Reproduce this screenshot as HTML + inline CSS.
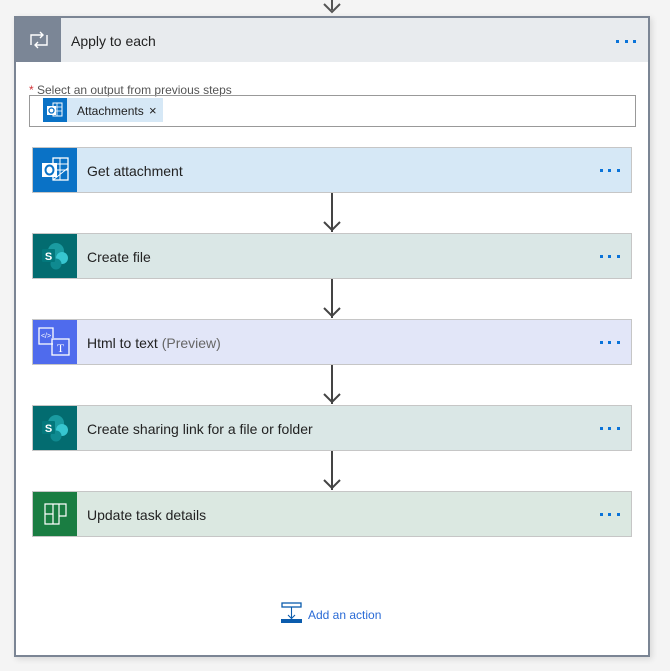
<!DOCTYPE html>
<html><head><meta charset="utf-8"><style>
*{box-sizing:border-box;margin:0;padding:0}
body{width:670px;height:671px;background:#f4f4f4;font-family:"Liberation Sans",sans-serif;position:relative;overflow:hidden}
.box{position:absolute;left:14px;top:16px;width:636px;height:641px;border:2px solid #7b8594;background:#fff;box-shadow:2px 2px 6px rgba(0,0,0,.12)}
.hdr{position:absolute;left:0;top:0;width:632px;height:44px;background:#e8ebee}
.hicon{position:absolute;left:0;top:0;width:45px;height:44px;background:#7b8696}
.htxt{position:absolute;left:55px;top:15px;font-size:14px;color:#222}
.dots{position:absolute;width:22px;height:3px}
.dots i{position:absolute;top:0;width:3px;height:3px;background:#0a73d9}
.lbl{position:absolute;left:13px;top:65px;font-size:12px;color:#555}
.lbl span{color:#d13438}
.inp{position:absolute;left:13px;top:77px;width:607px;height:32px;border:1px solid #999}
.chip{position:absolute;left:13px;top:2px;height:24px;width:120px;background:#d6e8f6;font-size:12px;color:#222}
.card{position:absolute;left:16px;width:600px;height:46px;border:1px solid #c6c6c6}
.ci{position:absolute;left:0;top:0;width:44px;height:44px}
.ct{position:absolute;left:54px;top:15px;font-size:14px;color:#222}
.arrow{position:absolute;left:315px;width:2px;background:#444}
</style></head><body>
<div style="position:absolute;left:331px;top:0;width:2px;height:10px;background:#555"></div>
<svg style="position:absolute;left:322px;top:0" width="20" height="16"><path d="M2 4 L10 12 L18 4" stroke="#555" stroke-width="2" fill="none"/></svg>
<div class="box">
 <div class="hdr">
  <div class="hicon"><svg width="45" height="44"><path d="M15 27 V17 H27 M24 14 L27 17 L24 20" stroke="#fff" stroke-width="1.4" fill="none"/><path d="M31 17 V27 H19 M22 30 L19 27 L22 24" stroke="#fff" stroke-width="1.4" fill="none"/></svg></div>
  <div class="htxt">Apply to each</div>
  <div class="dots" style="left:600px;top:22px"><i style="left:0"></i><i style="left:9px"></i><i style="left:17px"></i></div>
 </div>
 <div class="lbl"><span>*</span> Select an output from previous steps</div>
 <div class="inp"><div class="chip">
  <div style="position:absolute;left:0;top:0;width:24px;height:24px;background:#0a72c6"><svg width="24" height="24"><rect x="10" y="5" width="9" height="13" fill="none" stroke="#fff"/><path d="M10 9h9M10 13h9M14 5v13" stroke="#fff" stroke-width=".8"/><rect x="4" y="8" width="9" height="9" fill="#fff"/><circle cx="8.5" cy="12.5" r="2.5" fill="none" stroke="#0a72c6" stroke-width="1.3"/></svg></div>
  <span style="position:absolute;left:34px;top:6px">Attachments</span><span style="position:absolute;left:106px;top:5px;font-size:13px">×</span>
 </div></div>

 <div class="card" style="top:129px;background:#d6e8f6"><div class="ci" style="background:#0a72c6"><svg width="44" height="44"><rect x="20" y="10" width="15" height="22" fill="none" stroke="#fff" stroke-width="1.3"/><path d="M20 16h15M20 22h15M27 10v22M20 32 L35 20" stroke="#fff" stroke-width="1"/><rect x="9" y="15" width="15" height="14" fill="#fff"/><ellipse cx="16.5" cy="22" rx="4" ry="4.5" fill="none" stroke="#0a72c6" stroke-width="2"/></svg></div><div class="ct">Get attachment</div><div class="dots" style="left:567px;top:21px"><i style="left:0"></i><i style="left:8px"></i><i style="left:17px"></i></div></div>
 <div class="arrow" style="top:175px;height:39px"></div><svg style="position:absolute;left:306px;top:199px" width="20" height="16"><path d="M2 5 L10 13 L18 5" stroke="#444" stroke-width="2" fill="none"/></svg>

 <div class="card" style="top:215px;background:#dae7e6"><div class="ci" style="background:#036c70"><svg width="44" height="44"><circle cx="23" cy="17" r="8" fill="#1a9ba1"/><circle cx="29" cy="24" r="6" fill="#37c6d0"/><circle cx="23" cy="30" r="5.5" fill="#0f8a90"/><rect x="9" y="15" width="13" height="13" rx="1" fill="#03787c"/><text x="15.5" y="26" font-size="11" font-weight="bold" fill="#fff" text-anchor="middle" font-family="Liberation Sans">S</text></svg></div><div class="ct">Create file</div><div class="dots" style="left:567px;top:21px"><i style="left:0"></i><i style="left:8px"></i><i style="left:17px"></i></div></div>
 <div class="arrow" style="top:261px;height:39px"></div><svg style="position:absolute;left:306px;top:285px" width="20" height="16"><path d="M2 5 L10 13 L18 5" stroke="#444" stroke-width="2" fill="none"/></svg>

 <div class="card" style="top:301px;background:#e2e6f8"><div class="ci" style="background:#4f6bed"><svg width="44" height="44"><path d="M20 24 H6 V8 H20 V18" stroke="#fff" stroke-width="1.3" fill="none"/><rect x="19" y="19" width="17" height="16" fill="none" stroke="#fff" stroke-width="1.3"/><text x="13" y="18" font-size="7" fill="#fff" text-anchor="middle" font-family="Liberation Sans">&lt;/&gt;</text><text x="27.5" y="32" font-size="12" fill="#fff" text-anchor="middle" font-family="Liberation Serif">T</text></svg></div><div class="ct">Html to text <span style="color:#666">(Preview)</span></div><div class="dots" style="left:567px;top:21px"><i style="left:0"></i><i style="left:8px"></i><i style="left:17px"></i></div></div>
 <div class="arrow" style="top:347px;height:39px"></div><svg style="position:absolute;left:306px;top:371px" width="20" height="16"><path d="M2 5 L10 13 L18 5" stroke="#444" stroke-width="2" fill="none"/></svg>

 <div class="card" style="top:387px;background:#dae7e6"><div class="ci" style="background:#036c70"><svg width="44" height="44"><circle cx="23" cy="17" r="8" fill="#1a9ba1"/><circle cx="29" cy="24" r="6" fill="#37c6d0"/><circle cx="23" cy="30" r="5.5" fill="#0f8a90"/><rect x="9" y="15" width="13" height="13" rx="1" fill="#03787c"/><text x="15.5" y="26" font-size="11" font-weight="bold" fill="#fff" text-anchor="middle" font-family="Liberation Sans">S</text></svg></div><div class="ct">Create sharing link for a file or folder</div><div class="dots" style="left:567px;top:21px"><i style="left:0"></i><i style="left:8px"></i><i style="left:17px"></i></div></div>
 <div class="arrow" style="top:433px;height:39px"></div><svg style="position:absolute;left:306px;top:457px" width="20" height="16"><path d="M2 5 L10 13 L18 5" stroke="#444" stroke-width="2" fill="none"/></svg>

 <div class="card" style="top:473px;background:#dbe8e1"><div class="ci" style="background:#1a7d42"><svg width="44" height="44"><path d="M12 12h8v10h-8zM20 12h6v20h-6zM26 12h7v12h-7zM12 22h8v10h-8z" fill="none" stroke="#fff" stroke-width="1.2"/></svg></div><div class="ct">Update task details</div><div class="dots" style="left:567px;top:21px"><i style="left:0"></i><i style="left:8px"></i><i style="left:17px"></i></div></div>

 <svg style="position:absolute;left:265px;top:584px" width="22" height="22"><rect x="1" y="1" width="19" height="4" fill="none" stroke="#0b5cad" stroke-width="1.3"/><path d="M10.5 5v11M7 13l3.5 3.5 3.5-3.5" stroke="#0b5cad" stroke-width="1.1" fill="none"/><rect x="0" y="17" width="21" height="4" fill="#0b5cad"/></svg>
 <div style="position:absolute;left:292px;top:590px;font-size:12px;color:#2a6bd6">Add an action</div>
</div>
</body></html>
